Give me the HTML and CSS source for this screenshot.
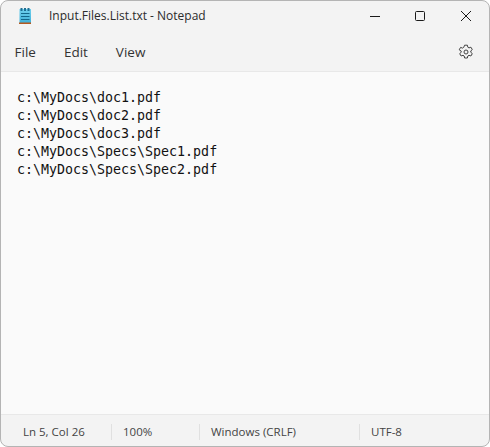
FILE: index.html
```html
<!DOCTYPE html>
<html lang="en">
<head>
  <meta charset="UTF-8">
  <meta name="viewport" content="width=device-width, initial-scale=1.0">
  <title>Input.Files.List.txt - Notepad</title>
  <link rel="stylesheet" href="styles.css">
</head>
<body>
  <div class="window">
    <div class="titlebar">
      <svg class="app-icon" width="13" height="18" viewBox="0 0 13 18">
        <defs>
          <linearGradient id="pad" x1="0" y1="0" x2="0" y2="1">
            <stop offset="0" stop-color="#6fd0ee"/>
            <stop offset="1" stop-color="#3fb0d8"/>
          </linearGradient>
        </defs>
        <rect x="0.500" y="2" width="11.500" height="14" fill="url(#pad)"/>
        <rect x="0" y="15.500" width="12" height="1.500" fill="#b5591f"/>
        <rect x="1.500" y="1" width="2" height="3" fill="#1f6f93"/>
        <rect x="5" y="1" width="2" height="3" fill="#1f6f93"/>
        <rect x="8.500" y="1" width="2" height="3" fill="#1f6f93"/>
        <rect x="2" y="6" width="8.500" height="1" fill="#14688c"/>
        <rect x="2" y="9" width="8.500" height="1" fill="#14688c"/>
        <rect x="2" y="12" width="8.500" height="1" fill="#14688c"/>
      </svg>
      <span class="title">Input.Files.List.txt - Notepad</span>
      <div class="controls">
        <svg width="10" height="10" viewBox="0 0 10 10"><path d="M0 5.500h10" stroke="#1a1a1a" fill="none"/></svg>
        <svg width="10" height="10" viewBox="0 0 10 10"><rect x="0.500" y="0.500" width="9" height="9" rx="1" stroke="#1a1a1a" fill="none"/></svg>
        <svg width="10" height="10" viewBox="0 0 10 10"><path d="M0 0l10 10M10 0L0 10" stroke="#1a1a1a" fill="none"/></svg>
      </div>
    </div>
    <div class="menubar">
      <span class="menu-item">File</span>
      <span class="menu-item">Edit</span>
      <span class="menu-item">View</span>
      <svg class="settings" width="16" height="16" viewBox="0 0 16 16">
        <path d="M6.600 1.200h2.800l.4 2 1.200.7 1.900-.7 1.400 2.400-1.500 1.300v1.400l1.500 1.300-1.400 2.400-1.900-.7-1.200.7-.4 2H6.600l-.4-2-1.200-.7-1.900.7-1.400-2.400 1.500-1.300V7.100L1.200 5.800l1.400-2.400 1.900.7 1.200-.7z" stroke="#444" stroke-width="1" fill="none" stroke-linejoin="round"/>
        <circle cx="8" cy="8" r="2" stroke="#444" fill="none"/>
      </svg>
    </div>
    <pre class="editor">c:\MyDocs\doc1.pdf
c:\MyDocs\doc2.pdf
c:\MyDocs\doc3.pdf
c:\MyDocs\Specs\Spec1.pdf
c:\MyDocs\Specs\Spec2.pdf</pre>
    <div class="statusbar">
      <span class="cell cell-pos">Ln 5, Col 26</span>
      <span class="cell cell-zoom">100%</span>
      <span class="cell cell-eol">Windows (CRLF)</span>
      <span class="cell cell-enc">UTF-8</span>
    </div>
  </div>
</body>
</html>
```
FILE: styles.css
```css
html, body {
  margin: 0;
  height: 100%;
  background: #fff;
}
.window {
  box-sizing: border-box;
  height: 447px;
  display: flex;
  flex-direction: column;
  border: 1px solid #b4b4b4;
  border-radius: 8px;
  overflow: hidden;
  background: #f3f3f3;
  font-family: "Open Sans", "Noto Sans", sans-serif;
  color: #222;
}
.titlebar {
  height: 29px;
  display: flex;
  align-items: center;
  padding-left: 18px;
}
.app-icon {
  flex: none;
}
.title {
  margin-left: 17px;
  font-size: 12px;
  color: #2b2b2b;
}
.controls {
  margin-left: auto;
  padding-right: 18px;
  display: flex;
  gap: 35px;
}
.controls svg:last-child {
  margin-left: 1px;
}
.menubar {
  height: 41px;
  box-sizing: border-box;
  display: flex;
  align-items: center;
  gap: 28px;
  padding: 3px 15px 0 13.5px;
  font-size: 13.5px;
  color: #333;
}
.settings {
  margin-left: auto;
}
.editor {
  flex: 1;
  margin: 0;
  padding: 17px 16px;
  border-top: 1px solid #e8e8e8;
  border-bottom: 1px solid #e8e8e8;
  background: #fafafa;
  font-family: "DejaVu Sans Mono", monospace;
  font-size: 13.3px;
  line-height: 18px;
  color: #111;
}
.statusbar {
  height: 31px;
  padding-top: 2px;
  box-sizing: border-box;
  display: flex;
  align-items: center;
  font-size: 11.5px;
  color: #444;
}
.cell {
  box-sizing: border-box;
  height: 16px;
  line-height: 16px;
  padding-left: 11px;
  border-left: 1px solid #e0e0e0;
}
.cell-pos {
  width: 110px;
  padding-left: 22px;
  border-left: 0;
}
.cell-zoom {
  width: 88px;
}
.cell-eol {
  width: 160px;
}
.cell-enc {
  padding-left: 11px;
}
```
